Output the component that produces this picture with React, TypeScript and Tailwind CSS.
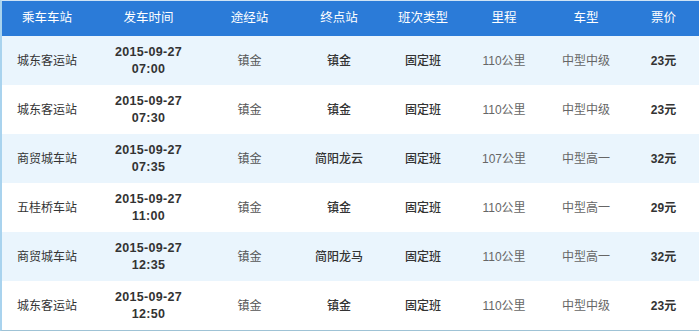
import React from "react";

const HEAD = ["乘车车站", "发车时间", "途经站", "终点站", "班次类型", "里程", "车型", "票价"];

const ROWS = [
  { from: "城东客运站", date: "2015-09-27", time: "07:00", via: "镇金", to: "镇金", km: "110公里", bus: "中型中级", price: "23元" },
  { from: "城东客运站", date: "2015-09-27", time: "07:30", via: "镇金", to: "镇金", km: "110公里", bus: "中型中级", price: "23元" },
  { from: "商贸城车站", date: "2015-09-27", time: "07:35", via: "镇金", to: "简阳龙云", km: "107公里", bus: "中型高一", price: "32元" },
  { from: "五桂桥车站", date: "2015-09-27", time: "11:00", via: "镇金", to: "镇金", km: "110公里", bus: "中型高一", price: "29元" },
  { from: "商贸城车站", date: "2015-09-27", time: "12:35", via: "镇金", to: "简阳龙马", km: "110公里", bus: "中型高一", price: "32元" },
  { from: "城东客运站", date: "2015-09-27", time: "12:50", via: "镇金", to: "镇金", km: "110公里", bus: "中型中级", price: "23元" },
];

const grid = "grid grid-cols-[90px_113px_89px_90px_78px_84px_80px_75px]";

export default function App() {
  return (
    <div className="w-[699px] h-[332px] bg-white font-['Liberation_Sans','Noto_Sans_CJK_SC',sans-serif] text-[12px] text-[#333]">
      <div className="border-l-2 border-b border-t border-l-[#a9d3ee] border-b-[#9fc3d6] border-t-[#cfe3f5]">
        <div className={`${grid} h-[35px] items-center bg-[#2b7bd8] text-white text-[12.5px]`}>
          {HEAD.map((h) => (
            <div key={h} className="text-center">
              {h}
            </div>
          ))}
        </div>

        {ROWS.map((r, i) => (
          <div
            key={i}
            className={`${grid} h-[49px] items-center ${i % 2 === 0 ? "bg-[#eaf5fd]" : "bg-white"}`}
          >
            <div className="text-center">{r.from}</div>
            <div className="text-center font-bold leading-[17px] text-[12.5px] tracking-[0.3px]">
              <div>{r.date}</div>
              <div>{r.time}</div>
            </div>
            <div className="text-center text-[#555]">{r.via}</div>
            <div className="text-center font-medium">{r.to}</div>
            <div className="text-center font-medium">固定班</div>
            <div className="text-center text-[#666]">{r.km}</div>
            <div className="text-center text-[#666]">{r.bus}</div>
            <div className="text-center font-bold">{r.price}</div>
          </div>
        ))}
      </div>
    </div>
  );
}
